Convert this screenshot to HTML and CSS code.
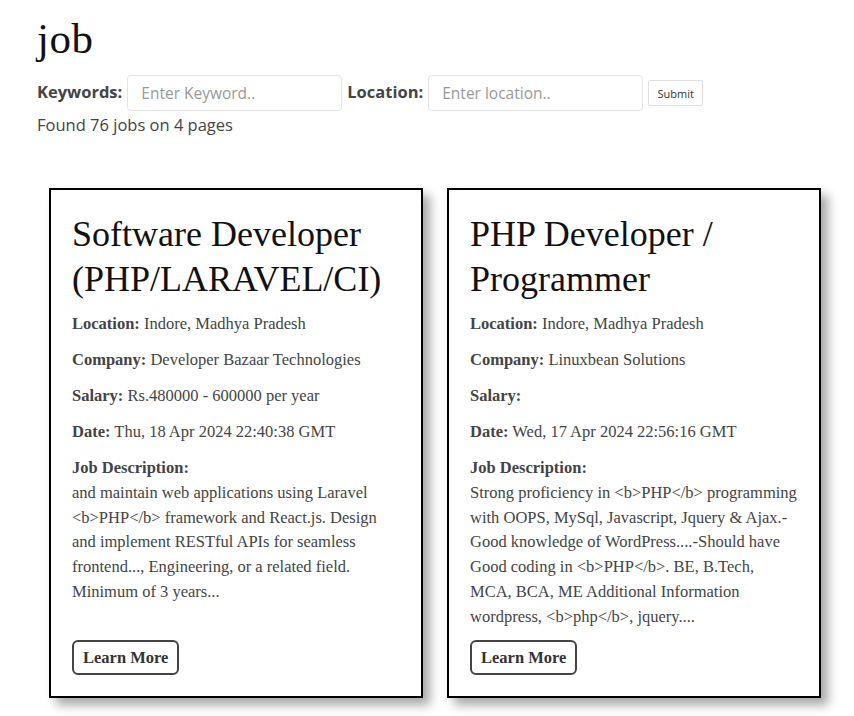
FILE: index.html
```html
<!DOCTYPE html>
<html lang="en">
<head>
<meta charset="utf-8">
<title>job</title>
<link rel="stylesheet" href="styles.css">
</head>
<body>
<div class="page">
  <h1 class="site-title">job</h1>
  <form class="search">
    <label class="search-label" for="kw">Keywords:</label>
    <input class="search-input" id="kw" type="text" placeholder="Enter Keyword..">
    <label class="search-label" for="loc">Location:</label>
    <input class="search-input" id="loc" type="text" placeholder="Enter location..">
    <button class="search-submit" type="button">Submit</button>
  </form>
  <p class="found">Found 76 jobs on 4 pages</p>

  <div class="jobs">
    <div class="card">
      <h2 class="card-title">Software Developer (PHP/LARAVEL/CI)</h2>
      <p class="info"><b>Location:</b> Indore, Madhya Pradesh</p>
      <p class="info"><b>Company:</b> Developer Bazaar Technologies</p>
      <p class="info"><b>Salary:</b> Rs.480000 - 600000 per year</p>
      <p class="info"><b>Date:</b> Thu, 18 Apr 2024 22:40:38 GMT</p>
      <p class="desc"><b>Job Description:</b><br>and maintain web applications using Laravel &lt;b&gt;PHP&lt;/b&gt; framework and React.js. Design and implement RESTful APIs for seamless frontend..., Engineering, or a related field. Minimum of 3 years...</p>
      <a class="learn" href="#">Learn More</a>
    </div>
    <div class="card">
      <h2 class="card-title">PHP Developer / Programmer</h2>
      <p class="info"><b>Location:</b> Indore, Madhya Pradesh</p>
      <p class="info"><b>Company:</b> Linuxbean Solutions</p>
      <p class="info"><b>Salary:</b> </p>
      <p class="info"><b>Date:</b> Wed, 17 Apr 2024 22:56:16 GMT</p>
      <p class="desc"><b>Job Description:</b><br>Strong proficiency in &lt;b&gt;PHP&lt;/b&gt; programming with OOPS, MySql, Javascript, Jquery &amp; Ajax.-Good knowledge of WordPress....-Should have Good coding in &lt;b&gt;PHP&lt;/b&gt;. BE, B.Tech, MCA, BCA, ME Additional Information wordpress, &lt;b&gt;php&lt;/b&gt;, jquery....</p>
      <a class="learn" href="#">Learn More</a>
    </div>
  </div>
</div>
</body>
</html>
```

FILE: styles.css
```css
html, body {
  margin: 0;
  padding: 0;
  background: #fff;
}

.page {
  padding: 0 37px 40px 37px;
  font-family: "Open Sans", "Liberation Sans", sans-serif;
  color: #444;
}

.site-title {
  font-family: "Liberation Serif", "DejaVu Serif", serif;
  font-weight: 400;
  font-size: 43px;
  line-height: 50px;
  color: #111;
  margin: 0;
  padding-top: 14px;
  letter-spacing: 0.5px;
}

.search {
  display: flex;
  align-items: center;
  margin-top: 11px;
  height: 36px;
}

.search-label {
  font-weight: 700;
  font-size: 16.5px;
  color: #444;
  margin-right: 5px;
  position: relative;
  top: -2px;
}

.search-input {
  box-sizing: border-box;
  width: 215px;
  height: 36px;
  border: 1px solid #e4e4e4;
  border-radius: 4px;
  padding: 0 13px;
  font-family: "Open Sans", "Liberation Sans", sans-serif;
  font-size: 15.5px;
  color: #444;
  margin-right: 5px;
  outline: none;
}

.search-input::placeholder {
  color: #999;
}

.search-submit {
  box-sizing: border-box;
  height: 26px;
  width: 55px;
  border: 1px solid #e0e0e0;
  border-radius: 2px;
  background: #fff;
  font-family: "Open Sans", "Liberation Sans", sans-serif;
  font-size: 11px;
  color: #333;
  padding: 0;
  margin-left: 0;
}

.found {
  margin: 2px 0 0 0;
  font-size: 16.5px;
  line-height: 24px;
}

.jobs {
  display: grid;
  grid-template-columns: 374px 374px;
  column-gap: 24px;
  padding: 0 12px;
  margin-top: 51px;
}

.card {
  box-sizing: border-box;
  border: 2px solid #000;
  background: #fff;
  box-shadow: 7px 7px 10px rgba(0, 0, 0, 0.35);
  padding: 22px 21px 21px 21px;
  display: flex;
  flex-direction: column;
  font-family: "Liberation Serif", "DejaVu Serif", serif;
  color: #444;
}

.card-title {
  font-family: "Liberation Serif", "DejaVu Serif", serif;
  font-weight: 400;
  font-size: 36px;
  line-height: 45px;
  color: #111;
  margin: 0 0 12px 0;
}

.info {
  margin: 0 0 16px 0;
  font-size: 16.5px;
  line-height: 20px;
}

.info b, .desc b {
  color: #444;
}

.desc {
  margin: -2px 0 10px 0;
  font-size: 16.5px;
  line-height: 24.8px;
}

.learn {
  margin-top: auto;
  align-self: flex-start;
  box-sizing: border-box;
  height: 35px;
  padding: 0 9px;
  border: 2px solid #444;
  border-radius: 6px;
  font-weight: 700;
  font-size: 16.5px;
  line-height: 31px;
  color: #333;
  text-decoration: none;
}
```
